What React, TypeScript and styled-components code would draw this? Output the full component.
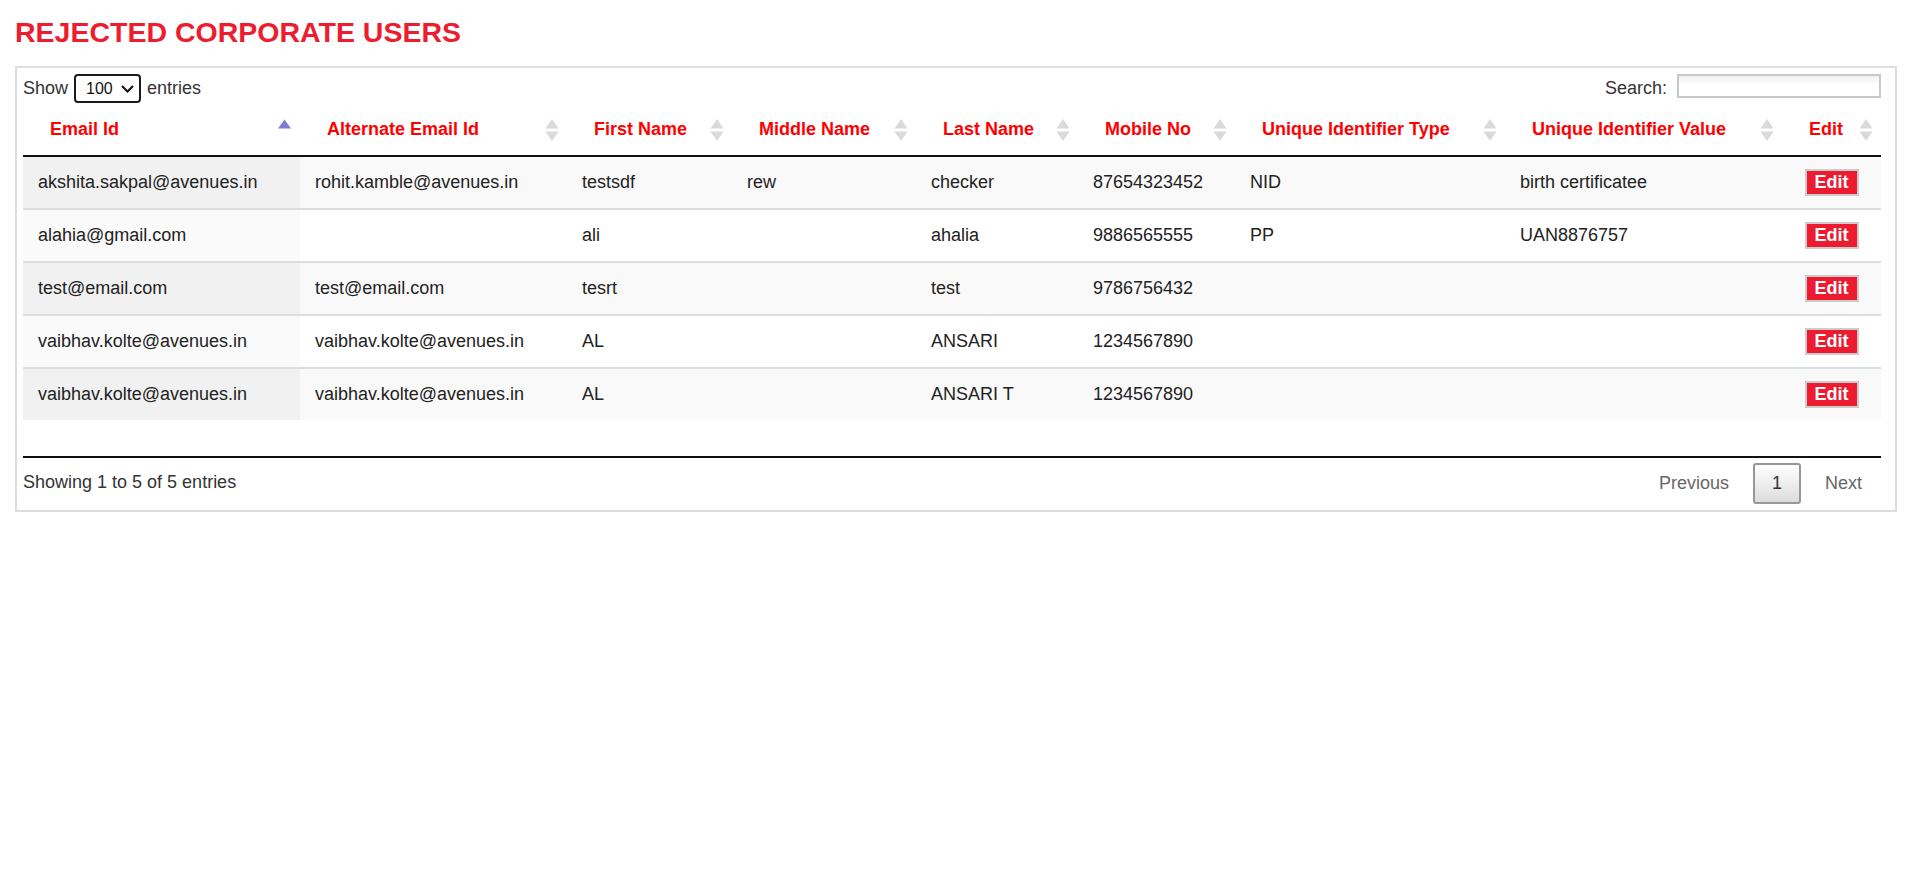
import React from 'react';
import styled, { createGlobalStyle } from 'styled-components';

const GlobalStyle = createGlobalStyle`
  html, body { margin: 0; padding: 0; background: #fff; }
  body {
    font-family: "Liberation Sans", Arial, Helvetica, sans-serif;
    color: #222;
  }
  * { box-sizing: border-box; }
`;

const Page = styled.div`
  padding: 16px 23px 0 15px;
`;

const Title = styled.h1`
  margin: 0 0 18px 0;
  font-size: 28.5px;
  line-height: 32px;
  font-weight: bold;
  color: #ed1c2e;
`;

const Panel = styled.div`
  border: 2px solid #dddddd;
  padding: 6px 14px 6px 6px;
`;

const Toolbar = styled.div`
  display: flex;
  justify-content: space-between;
  align-items: flex-start;
  height: 29px;
  margin-bottom: 1px;
`;

const LengthBox = styled.label`
  display: flex;
  align-items: center;
  gap: 6px;
  font-size: 18px;
  color: #333;
  height: 29px;
`;

const SelectWrap = styled.span`
  position: relative;
  display: inline-block;
  width: 67px;
  height: 29px;
`;

const Select = styled.select`
  appearance: none;
  -webkit-appearance: none;
  width: 67px;
  height: 29px;
  border: 2px solid #1b1b1b;
  border-radius: 4px;
  background: #fff;
  padding: 0 0 0 10px;
  font-family: "Liberation Sans", Arial, sans-serif;
  font-size: 16px;
  color: #111;
  outline: none;
`;

const Chevron = styled.svg`
  position: absolute;
  left: 47px;
  top: 11px;
  pointer-events: none;
`;

const FilterBox = styled.label`
  display: flex;
  align-items: flex-start;
  gap: 10px;
  font-size: 18px;
  color: #333;
`;

const FilterText = styled.span`
  padding-top: 4px;
  line-height: normal;
`;

const SearchInput = styled.input`
  width: 204px;
  height: 24px;
  border: 2px solid #c8c8c8;
  background: linear-gradient(to bottom, #f0f0f0 0%, #ffffff 45%);
  padding: 0 4px;
  font-size: 16px;
  outline: none;
`;

const ScrollBody = styled.div`
  width: 1858px;
  padding-bottom: 36px;
  border-bottom: 2px solid #111;
`;

const Table = styled.table`
  width: 1858px;
  table-layout: fixed;
  border-collapse: separate;
  border-spacing: 0;
  font-size: 18px;
`;

const Th = styled.th`
  position: relative;
  text-align: left;
  padding: 15px 27px;
  font-size: 18px;
  line-height: normal;
  font-weight: bold;
  color: #ff0000;
  white-space: nowrap;
  border-bottom: 2px solid #111;
  background: #fff;
`;

const SortIcon = styled.svg`
  position: absolute;
  right: 8px;
  top: 50%;
  transform: translateY(-50%);
`;

const Row = styled.tr`
  & + & > td {
    border-top: 2px solid #dddddd;
  }
`;

const Td = styled.td<{ $sorted?: boolean; $odd: boolean; $center?: boolean }>`
  padding: ${(p) => (p.$center ? '12px 0' : '12px 15px')};
  text-align: ${(p) => (p.$center ? 'center' : 'left')};
  line-height: normal;
  color: #222;
  white-space: nowrap;
  vertical-align: middle;
  background: ${(p) =>
    p.$sorted ? (p.$odd ? '#f1f1f1' : '#fafafa') : p.$odd ? '#f9f9f9' : '#ffffff'};
`;

const EditButton = styled.button`
  display: inline-block;
  font-family: "Liberation Sans", Arial, sans-serif;
  font-size: 18px;
  font-weight: bold;
  line-height: 21px;
  color: #fff;
  background: #ec1b30;
  border: 2px solid #cccccc;
  padding: 1px 8px;
  margin: 0;
  cursor: pointer;
`;

const Footer = styled.div`
  display: flex;
  justify-content: space-between;
  align-items: flex-start;
  width: 1858px;
`;

const Info = styled.div`
  padding-top: 13.6px;
  font-size: 18px;
  line-height: normal;
  color: #333;
`;

const Paginate = styled.div`
  display: flex;
  gap: 5px;
  padding-top: 4.5px;
`;

const PageButton = styled.span<{ $current?: boolean }>`
  display: inline-block;
  padding: 8px 17px;
  font-size: 18px;
  line-height: normal;
  border-radius: 3px;
  border: 2px solid ${(p) => (p.$current ? '#979797' : 'transparent')};
  color: ${(p) => (p.$current ? '#333' : '#666')};
  background: ${(p) =>
    p.$current ? 'linear-gradient(to bottom, #ffffff 0%, #dcdcdc 100%)' : 'transparent'};
  cursor: default;
`;

const columns = [
  { title: 'Email Id', width: 277 },
  { title: 'Alternate Email Id', width: 267 },
  { title: 'First Name', width: 165 },
  { title: 'Middle Name', width: 184 },
  { title: 'Last Name', width: 162 },
  { title: 'Mobile No', width: 157 },
  { title: 'Unique Identifier Type', width: 270 },
  { title: 'Unique Identifier Value', width: 277 },
  { title: 'Edit', width: 99 },
];

const rows: string[][] = [
  ['akshita.sakpal@avenues.in', 'rohit.kamble@avenues.in', 'testsdf', 'rew', 'checker', '87654323452', 'NID', 'birth certificatee'],
  ['alahia@gmail.com', '', 'ali', '', 'ahalia', '9886565555', 'PP', 'UAN8876757'],
  ['test@email.com', 'test@email.com', 'tesrt', '', 'test', '9786756432', '', ''],
  ['vaibhav.kolte@avenues.in', 'vaibhav.kolte@avenues.in', 'AL', '', 'ANSARI', '1234567890', '', ''],
  ['vaibhav.kolte@avenues.in', 'vaibhav.kolte@avenues.in', 'AL', '', 'ANSARI T', '1234567890', '', ''],
];

function Sort({ active }: { active?: boolean }) {
  return (
    <SortIcon width="14" height="23" viewBox="0 0 14 23" aria-hidden="true">
      {active ? (
        <path d="M6.5 1 L13 10 L0 10 Z" fill="#7d7dd8" />
      ) : (
        <>
          <path d="M7 0.5 L13.5 10 L0.5 10 Z" fill="#dadada" />
          <path d="M0.5 13 L13.5 13 L7 22.5 Z" fill="#dadada" />
        </>
      )}
    </SortIcon>
  );
}

export default function App() {
  return (
    <>
      <GlobalStyle />
      <Page>
        <Title>REJECTED CORPORATE USERS</Title>
        <Panel>
          <Toolbar>
            <LengthBox>
              <span>Show</span>
              <SelectWrap>
                <Select defaultValue="100">
                  <option value="10">10</option>
                  <option value="25">25</option>
                  <option value="50">50</option>
                  <option value="100">100</option>
                </Select>
                <Chevron width="13" height="8" viewBox="0 0 13 8">
                  <polyline points="1,1 6.5,6.5 12,1" fill="none" stroke="#111" strokeWidth="2" />
                </Chevron>
              </SelectWrap>
              <span>entries</span>
            </LengthBox>
            <FilterBox>
              <FilterText>Search:</FilterText>
              <SearchInput type="search" />
            </FilterBox>
          </Toolbar>
          <ScrollBody>
            <Table>
              <colgroup>
                {columns.map((c) => (
                  <col key={c.title} style={{ width: c.width }} />
                ))}
              </colgroup>
              <thead>
                <tr>
                  {columns.map((c, i) => (
                    <Th key={c.title}>
                      {c.title}
                      <Sort active={i === 0} />
                    </Th>
                  ))}
                </tr>
              </thead>
              <tbody>
                {rows.map((r, ri) => (
                  <Row key={ri}>
                    {r.map((v, ci) => (
                      <Td key={ci} $sorted={ci === 0} $odd={ri % 2 === 0}>
                        {v}
                      </Td>
                    ))}
                    <Td $odd={ri % 2 === 0} $center>
                      <EditButton>Edit</EditButton>
                    </Td>
                  </Row>
                ))}
              </tbody>
            </Table>
          </ScrollBody>
          <Footer>
            <Info>Showing 1 to 5 of 5 entries</Info>
            <Paginate>
              <PageButton>Previous</PageButton>
              <PageButton $current>1</PageButton>
              <PageButton>Next</PageButton>
            </Paginate>
          </Footer>
        </Panel>
      </Page>
    </>
  );
}
